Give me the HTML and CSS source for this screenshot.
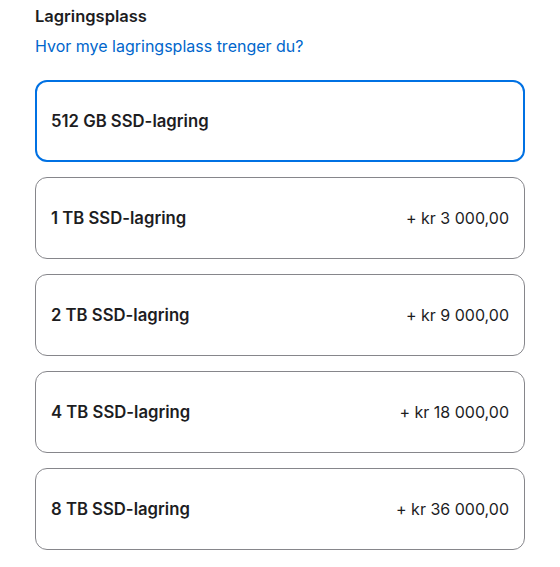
FILE: index.html
```html
<!DOCTYPE html>
<html lang="no">
<head>
<meta charset="utf-8">
<link rel="stylesheet" href="styles.css">
</head>
<body>
<section class="storage">
  <h2 class="title">Lagringsplass</h2>
  <a class="help" href="#">Hvor mye lagringsplass trenger du?</a>
  <div class="options">
    <div class="option selected"><span class="name">512 GB SSD-lagring</span></div>
    <div class="option"><span class="name">1 TB SSD-lagring</span><span class="price">+ kr 3 000,00</span></div>
    <div class="option"><span class="name">2 TB SSD-lagring</span><span class="price">+ kr 9 000,00</span></div>
    <div class="option"><span class="name">4 TB SSD-lagring</span><span class="price">+ kr 18 000,00</span></div>
    <div class="option"><span class="name">8 TB SSD-lagring</span><span class="price">+ kr 36 000,00</span></div>
  </div>
</section>
</body>
</html>
```
FILE: styles.css
```css
html, body {
  margin: 0;
  padding: 0;
  background: #fff;
}
body {
  font-family: Inter, "Liberation Sans", sans-serif;
  color: #1d1d1f;
}
.storage {
  padding: 6px 0 0 35px;
  width: 490px;
}
.title {
  margin: 0;
  font-size: 16.5px;
  font-weight: 600;
  line-height: 20px;
}
.help {
  display: block;
  margin-top: 10px;
  font-size: 16px;
  line-height: 20px;
  color: #0066cc;
  text-decoration: none;
}
.options {
  display: flex;
  flex-direction: column;
  gap: 15px;
  margin-top: 24px;
}
.option {
  box-sizing: border-box;
  height: 82px;
  border: 1px solid #86868b;
  border-radius: 12px;
  display: flex;
  align-items: center;
  justify-content: space-between;
  padding: 0 15px;
}
.option.selected {
  border: 2px solid #0071e3;
  padding: 0 14px;
}
.name {
  font-weight: 600;
  font-size: 16.7px;
}
.price {
  font-weight: 400;
  font-size: 16px;
}
```
